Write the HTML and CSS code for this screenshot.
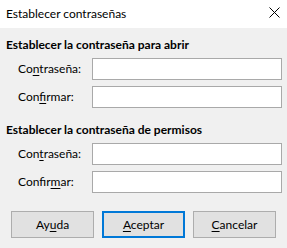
FILE: index.html
```html
<!DOCTYPE html>
<html lang="es">
<head>
<meta charset="utf-8">
<title>Establecer contraseñas</title>
<link rel="stylesheet" href="styles.css">
</head>
<body>
<div class="window">
  <div class="titlebar">
    <span class="title">Establecer contraseñas</span>
    <svg class="close" width="11" height="11" viewBox="0 0 11 11"><path d="M0.5 0.5L10.5 10.5M10.5 0.5L0.5 10.5" stroke="#000" stroke-width="1" fill="none"/></svg>
  </div>
  <div class="body">
    <section class="group">
      <h2 class="group-title">Establecer la contraseña para abrir</h2>
      <div class="row"><label class="label">Co<u>n</u>traseña:</label><span class="input"></span></div>
      <div class="row"><label class="label">Con<u>f</u>irmar:</label><span class="input"></span></div>
    </section>
    <section class="group group2">
      <h2 class="group-title">Establecer la contraseña de permisos</h2>
      <div class="row"><label class="label">Con<u>t</u>raseña:</label><span class="input"></span></div>
      <div class="row"><label class="label">Confir<u>m</u>ar:</label><span class="input"></span></div>
    </section>
    <div class="buttons">
      <button class="btn">Ay<u>u</u>da</button>
      <button class="btn btn-default"><u>A</u>ceptar</button>
      <button class="btn"><u>C</u>ancelar</button>
    </div>
  </div>
</div>
</body>
</html>
```
FILE: styles.css
```css
* { box-sizing: border-box; }
html, body { margin: 0; padding: 0; }
body {
  width: 287px;
  height: 248px;
  background: #f0f0f0;
  font-family: "Lato", "Segoe UI", sans-serif;
  font-size: 12px;
  color: #000;
  overflow: hidden;
}
.window { display: flex; flex-direction: column; height: 248px; }
.titlebar {
  height: 28px;
  background: #fff;
  display: flex;
  align-items: center;
  justify-content: space-between;
  padding: 0 7px 1px 6px;
}
.title { line-height: 16px; }
.close { display: block; margin-top: -2px; }
.body {
  flex: 1;
  background: #f0f0f0;
  padding: 9px 5px 0 6px;
  display: flex;
  flex-direction: column;
}
.group { display: flex; flex-direction: column; gap: 6px; }
.group2 { margin-top: 14px; }
.group-title {
  margin: 0 0 -1px;
  font-size: 12px;
  font-weight: bold;
  line-height: 16px;
}
.row { display: flex; align-items: center; height: 22px; }
.label { width: 86px; padding-left: 12px; line-height: 16px; }
.input {
  display: block;
  width: 190px;
  height: 22px;
  background: #fff;
  border: 1px solid #a9a9a9;
}
.buttons {
  margin-top: 18px;
  display: flex;
  gap: 8px;
  padding-left: 5px;
}
.btn {
  width: 83px;
  height: 27px;
  background: #e1e1e1;
  border: 1px solid #adadad;
  font: inherit;
  color: #000;
  padding: 0;
}
.btn-default { border: 2px solid #0078d7; }
u { text-decoration-thickness: 1px; text-underline-offset: 2px; }
```
